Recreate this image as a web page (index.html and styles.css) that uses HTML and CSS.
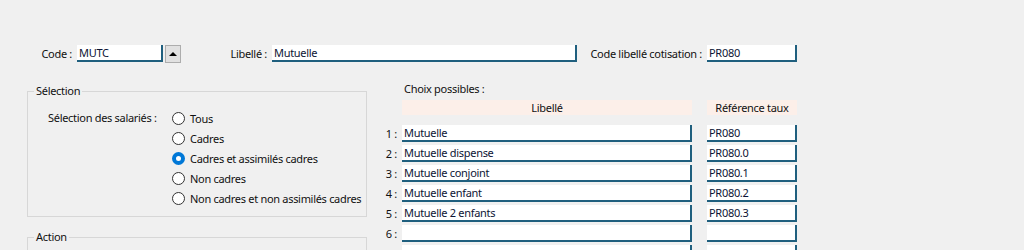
FILE: index.html
```html
<!DOCTYPE html>
<html lang="fr">
<head>
    <meta charset="UTF-8">
    <title>Cotisation mutuelle</title>
    <link rel="stylesheet" href="styles.css">
</head>
<body>

    <div class="top-row">
        <label class="lbl lbl-code">Code :</label>
        <input class="field field-code" type="text" value="MUTC">
        <button class="spin" type="button"><span class="arrow"></span></button>
        <label class="lbl lbl-libelle">Libellé :</label>
        <input class="field field-libelle" type="text" value="Mutuelle">
        <label class="lbl lbl-cotis">Code libellé cotisation :</label>
        <input class="field field-cotis" type="text" value="PR080">
    </div>

    <div class="main">
        <div class="left">
            <fieldset class="group group-selection">
                <legend>Sélection</legend>
                <div class="sel-row">
                    <span class="sel-label">Sélection des salariés :</span>
                    <div class="radios">
                        <label class="radio"><input type="radio" name="sal"> Tous</label>
                        <label class="radio"><input type="radio" name="sal"> Cadres</label>
                        <label class="radio"><input type="radio" name="sal" checked> Cadres et assimilés cadres</label>
                        <label class="radio"><input type="radio" name="sal"> Non cadres</label>
                        <label class="radio"><input type="radio" name="sal"> Non cadres et non assimilés cadres</label>
                    </div>
                </div>
            </fieldset>
            <fieldset class="group group-action">
                <legend>Action</legend>
            </fieldset>
        </div>

        <div class="right">
            <div class="choix-title">Choix possibles :</div>
            <div class="choix-head">
                <div class="head head-libelle">Libellé</div>
                <div class="head head-ref">Référence taux</div>
            </div>
            <div class="choix-grid">
                <span class="num">1 :</span>
                <input class="field col-libelle" type="text" value="Mutuelle">
                <input class="field col-ref" type="text" value="PR080">

                <span class="num">2 :</span>
                <input class="field col-libelle" type="text" value="Mutuelle dispense">
                <input class="field col-ref" type="text" value="PR080.0">

                <span class="num">3 :</span>
                <input class="field col-libelle" type="text" value="Mutuelle conjoint">
                <input class="field col-ref" type="text" value="PR080.1">

                <span class="num">4 :</span>
                <input class="field col-libelle" type="text" value="Mutuelle enfant">
                <input class="field col-ref" type="text" value="PR080.2">

                <span class="num">5 :</span>
                <input class="field col-libelle" type="text" value="Mutuelle 2 enfants">
                <input class="field col-ref" type="text" value="PR080.3">

                <span class="num">6 :</span>
                <input class="field col-libelle" type="text" value="">
                <input class="field col-ref" type="text" value="">

                <span class="num"></span>
                <input class="field col-libelle" type="text" value="">
                <input class="field col-ref" type="text" value="">
            </div>
        </div>
    </div>

</body>
</html>
```

FILE: styles.css
```css
body {
    background-color: #f0f0f0;
    font-family: "Noto Sans", "DejaVu Sans", sans-serif;
    font-size: 11px;
    letter-spacing: -0.3px;
    color: #111;
    margin: 0;
    padding: 0;
    height: 250px;
    overflow: hidden;
}
.top-row {
    display: flex;
    align-items: center;
    padding-top: 45px;
    height: 17px;
}
.lbl {
    text-align: right;
    padding-right: 5px;
    white-space: nowrap;
    box-sizing: border-box;
}
.lbl-code {
    width: 77px;
}
.lbl-libelle {
    width: 91px;
}
.lbl-cotis {
    width: 130px;
}
.field {
    height: 17px;
    box-sizing: border-box;
    border: none;
    border-right: 2px solid #1f5f7e;
    border-bottom: 2px solid #1f5f7e;
    background-color: #fff;
    font-family: inherit;
    font-size: 11px;
    letter-spacing: -0.3px;
    color: #0c1434;
    padding: 0 2px;
    margin: 0;
    outline: none;
}
.field-code {
    width: 86px;
}
.field-libelle {
    width: 305px;
}
.field-cotis {
    width: 90px;
}
.spin {
    width: 16px;
    height: 18px;
    margin-left: 2px;
    padding: 0;
    background-color: #e1e1e1;
    border: 1px solid #adadad;
    display: flex;
    align-items: center;
    justify-content: center;
}
.arrow {
    width: 0;
    height: 0;
    border-left: 4px solid transparent;
    border-right: 4px solid transparent;
    border-bottom: 4px solid #000;
}
.main {
    display: flex;
    padding-top: 21px;
    padding-left: 27px;
    gap: 13px;
}
.left {
    width: 340px;
    display: flex;
    flex-direction: column;
    gap: 12px;
}
.group {
    margin: 0;
    padding: 0;
    border: 1px solid #d7d7d7;
    min-width: 0;
}
.group legend {
    margin-left: 6px;
    padding: 0 2px;
    line-height: 16px;
}
.group-selection {
    height: 134px;
    box-sizing: border-box;
}
.group-action {
    height: 40px;
}
.sel-row {
    display: flex;
    padding-top: 10px;
    padding-left: 20px;
}
.sel-label {
    width: 124px;
    line-height: 18px;
    white-space: nowrap;
}
.radios {
    display: flex;
    flex-direction: column;
    gap: 2px;
}
.radio {
    display: flex;
    align-items: center;
    gap: 5px;
    height: 18px;
    white-space: nowrap;
}
.radio input {
    appearance: none;
    -webkit-appearance: none;
    width: 13px;
    height: 13px;
    margin: 0;
    border: 1px solid #333;
    border-radius: 50%;
    background-color: #fff;
    box-sizing: border-box;
}
.radio input:checked {
    border: 4px solid #0078d7;
}
.right {
    width: 420px;
    margin-top: -1px;
}
.choix-title {
    padding-left: 24px;
    line-height: 14px;
    height: 18px;
}
.choix-head {
    display: flex;
    padding-left: 22px;
    gap: 15px;
    margin-bottom: 10px;
}
.head {
    background-color: #fcefe9;
    text-align: center;
    line-height: 15px;
    height: 15px;
}
.head-libelle {
    width: 290px;
}
.head-ref {
    width: 90px;
}
.choix-grid {
    display: grid;
    grid-template-columns: 22px 305px 90px;
    row-gap: 3px;
    grid-auto-rows: 17px;
}
.col-libelle {
    width: 290px;
}
.col-ref {
    width: 90px;
}
.num {
    text-align: right;
    padding-right: 5px;
    line-height: 17px;
    white-space: nowrap;
}
```
